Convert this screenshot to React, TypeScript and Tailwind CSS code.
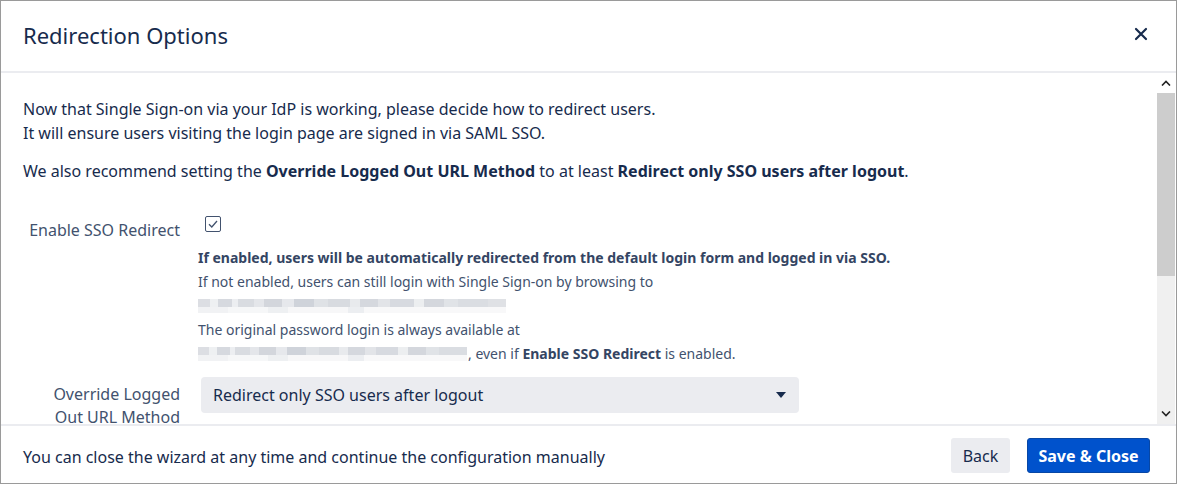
import React from "react";

const font = { fontFamily: '"Segoe UI", "Noto Sans", "Open Sans", sans-serif' };

function Blur({ w }: { w: string }) {
  return (
    <div className={`flex flex-col ${w} h-[14px] overflow-hidden`}>
      <div className="flex h-[8px]">
        <div className="w-[12px] bg-[#dcdee3]" />
        <div className="w-[8px] bg-[#eef0f2]" />
        <div className="w-[14px] bg-[#d6d9df]" />
        <div className="w-[6px] bg-[#eceef1]" />
        <div className="w-[16px] bg-[#d9dce1]" />
        <div className="w-[10px] bg-[#e4e6ea]" />
        <div className="w-[18px] bg-[#d3d6dc]" />
        <div className="w-[12px] bg-[#e6e8ec]" />
        <div className="w-[20px] bg-[#cfd3da]" />
        <div className="w-[14px] bg-[#dfe2e6]" />
        <div className="w-[22px] bg-[#d8dbe0]" />
        <div className="w-[10px] bg-[#e8eaed]" />
        <div className="w-[18px] bg-[#d5d8de]" />
        <div className="w-[12px] bg-[#e2e4e8]" />
        <div className="w-[24px] bg-[#d7dae0]" />
        <div className="w-[10px] bg-[#eceef0]" />
        <div className="w-[20px] bg-[#d4d7dd]" />
        <div className="w-[14px] bg-[#e0e3e7]" />
        <div className="w-[30px] bg-[#dadde2]" />
        <div className="flex-1 bg-[#dfe1e5]" />
      </div>
      <div className="flex h-[6px]">
        <div className="w-[30px] bg-[#f1f2f4]" />
        <div className="w-[40px] bg-[#f6f7f8]" />
        <div className="w-[20px] bg-[#eef0f2]" />
        <div className="w-[60px] bg-[#f7f7f8]" />
        <div className="w-[16px] bg-[#eceef1]" />
        <div className="flex-1 bg-[#f8f8f9]" />
      </div>
    </div>
  );
}

export default function App() {
  return (
    <div
      style={font}
      className="w-[1177px] h-[484px] bg-white border border-[#9a9a9a] flex flex-col overflow-hidden text-[#172b4d]"
    >
      {/* Header */}
      <div className="h-[72px] shrink-0 flex items-center justify-between pl-[22px] pr-[28px] border-b-2 border-[#ebecf0]">
        <h1 className="text-[22px] leading-[28px] font-normal text-[#172b4d] pb-[2px]">Redirection Options</h1>
        <svg width="14" height="14" viewBox="0 0 14 14" className="mb-[5px]">
          <path d="M2 2 L12 12 M12 2 L2 12" stroke="#172b4d" strokeWidth="2.2" strokeLinecap="round" />
        </svg>
      </div>

      {/* Body */}
      <div className="flex-1 flex min-h-0">
        <div className="flex-1 overflow-hidden pl-[22px] pt-[24px]">
          <p className="text-[16px] leading-[24px]">
            Now that Single Sign-on via your IdP is working, please decide how to redirect users.
            <br />
            It will ensure users visiting the login page are signed in via SAML SSO.
          </p>
          <p className="text-[16px] leading-[24px] mt-[14px]">
            We also recommend setting the <b className="font-bold">Override Logged Out URL Method</b> to at least{" "}
            <b className="font-bold">Redirect only SSO users after logout</b>.
          </p>

          <div className="flex mt-[35px]">
            <div className="w-[157px] text-right text-[16px] leading-[24px] text-[#42526e] pt-0">Enable SSO Redirect</div>
            <div className="ml-[18px] flex flex-col">
              <div className="h-[30px] flex items-start pl-[7px] -mt-[2px]">
                <div className="w-[16px] h-[16px] border border-[#42526e] rounded-[2px] flex items-center justify-center bg-white">
                  <svg width="12" height="12" viewBox="0 0 12 12">
                    <path d="M2 6.2 L4.8 9 L10 3" stroke="#42526e" strokeWidth="1.3" fill="none" />
                  </svg>
                </div>
              </div>
              <div className="text-[14px] leading-[24px] text-[#42526e]">
                <div className="font-bold text-[#344563]">
                  If enabled, users will be automatically redirected from the default login form and logged in via SSO.
                </div>
                <div>If not enabled, users can still login with Single Sign-on by browsing to</div>
                <div className="h-[24px] flex items-center">
                  <Blur w="w-[308px]" />
                </div>
                <div>The original password login is always available at</div>
                <div className="flex items-center h-[24px]">
                  <Blur w="w-[269px]" />
                  <span className="ml-[1px]">
                    , even if <b className="font-bold text-[#344563]">Enable SSO Redirect</b> is enabled.
                  </span>
                </div>
              </div>
            </div>
          </div>

          <div className="flex mt-[11px]">
            <div className="w-[157px] text-right text-[16px] leading-[23px] text-[#42526e] pt-[6px]">
              Override Logged
              <br />
              Out URL Method
            </div>
            <div className="ml-[21px] w-[598px] h-[36px] bg-[#ebecf0] rounded-[4px] flex items-center justify-between pl-[12px] pr-[13px]">
              <span className="text-[16px] text-[#172b4d]">Redirect only SSO users after logout</span>
              <svg width="10" height="6" viewBox="0 0 10 6">
                <path d="M0 0 L10 0 L5 6 Z" fill="#172b4d" />
              </svg>
            </div>
          </div>
        </div>

        {/* Scrollbar */}
        <div className="w-[18px] mr-[1px] bg-[#f0f0f0] flex flex-col shrink-0">
          <div className="h-[20px] bg-white flex items-center justify-center">
            <svg width="10" height="6" viewBox="0 0 10 6">
              <path d="M1 5.5 L5 1.5 L9 5.5" stroke="#222" strokeWidth="1.6" fill="none" />
            </svg>
          </div>
          <div className="h-[183px] bg-[#cdcdcd]" />
          <div className="flex-1" />
          <div className="h-[20px] flex items-center justify-center">
            <svg width="10" height="6" viewBox="0 0 10 6">
              <path d="M1 0.5 L5 4.5 L9 0.5" stroke="#222" strokeWidth="1.6" fill="none" />
            </svg>
          </div>
        </div>
      </div>

      {/* Footer */}
      <div className="h-[59px] shrink-0 border-t-2 border-[#ebecf0] flex items-center justify-between pl-[22px] pr-[26px]">
        <span className="text-[16px] text-[#172b4d] pt-[4px]">
          You can close the wizard at any time and continue the configuration manually
        </span>
        <div className="flex items-center gap-[17px] pt-[2px]">
          <button className="h-[35px] w-[59px] rounded-[3px] bg-[#ebecf0] text-[16px] text-[#172b4d]">Back</button>
          <button className="h-[35px] w-[123px] rounded-[3px] bg-[#0052cc] border border-[#0747a6] text-[16px] font-bold text-white">
            Save &amp; Close
          </button>
        </div>
      </div>
    </div>
  );
}
